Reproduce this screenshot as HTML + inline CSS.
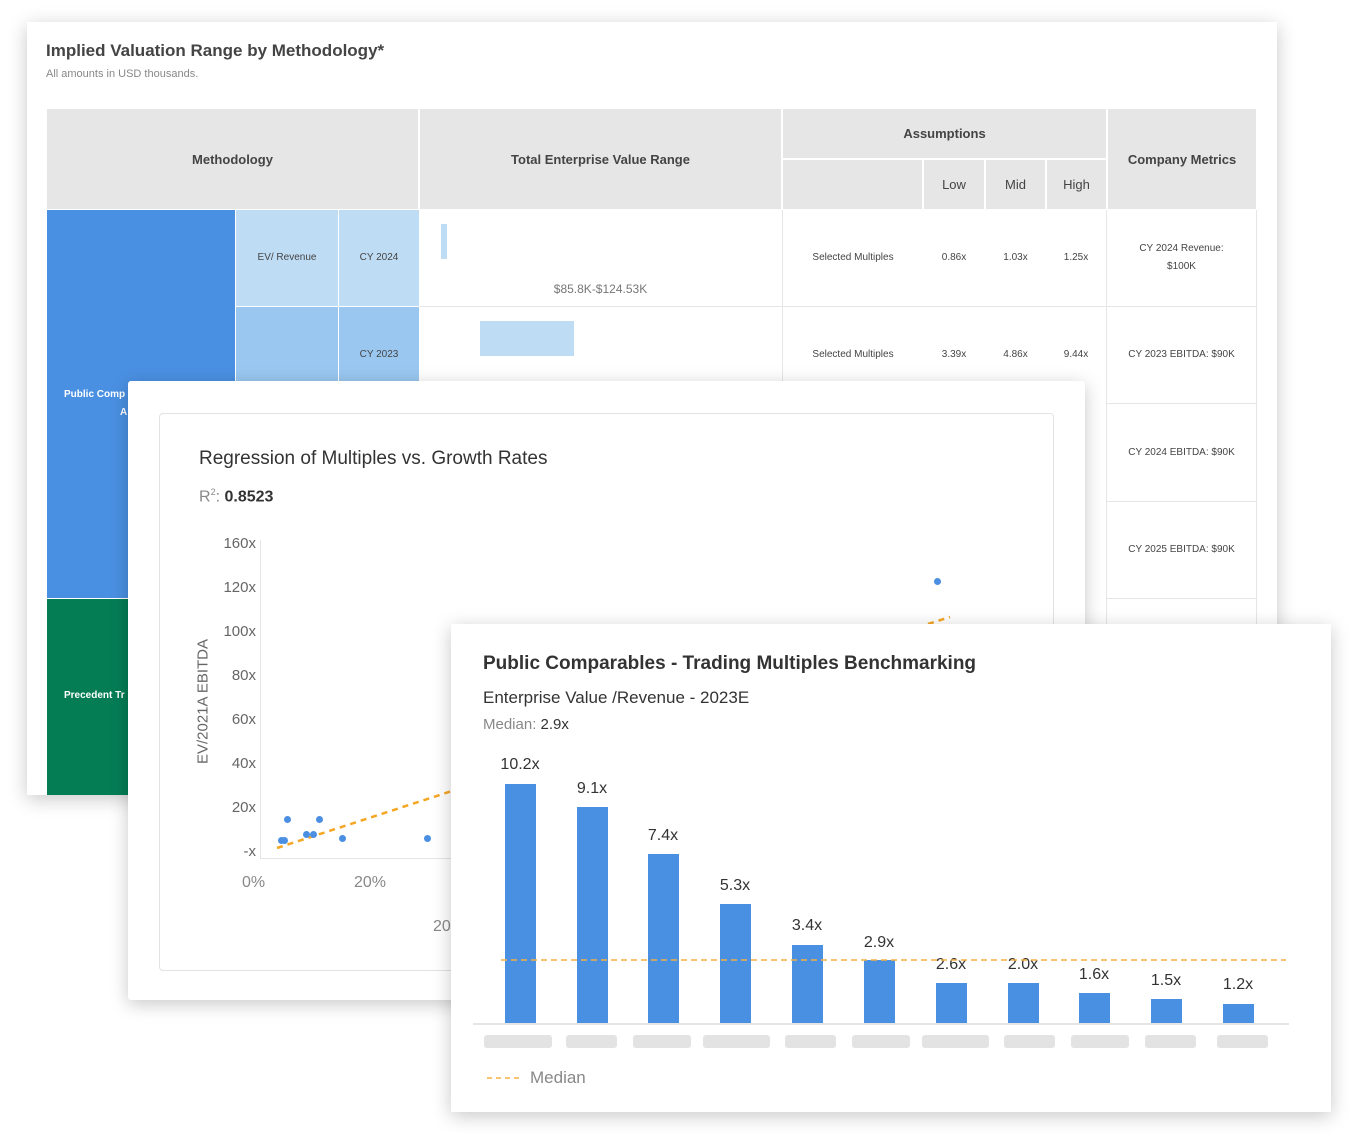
<!DOCTYPE html>
<html><head><style>
body{margin:0;width:1351px;height:1134px;background:#fff;position:relative;overflow:hidden;font-family:"Liberation Sans",sans-serif;color:#333}
.a{position:absolute}
.card{position:absolute;background:#fff;box-shadow:0 4px 18px rgba(0,0,0,.22)}
.h{background:#e6e6e6;font-weight:bold;font-size:13px;color:#444;display:flex;align-items:center;justify-content:center;position:absolute}
.c{position:absolute;display:flex;align-items:center;justify-content:center;font-size:10px;color:#444;text-align:center;line-height:18px}
.bar{position:absolute;background:#4a90e2;width:31px}
.lb{position:absolute;font-size:16px;color:#333;width:60px;text-align:center}
.pill{position:absolute;top:1035px;height:13px;background:#e3e3e3;border-radius:3px}
.yl{position:absolute;font-size:15px;color:#666;text-align:right;width:50px;left:206px}
.dot{position:absolute;width:7px;height:7px;border-radius:50%;background:#4a8fe2}
</style></head><body>

<div class="card" style="left:27px;top:22px;width:1250px;height:773px">
</div>
<div class="a" style="left:46px;top:41px;font-size:17px;font-weight:bold;color:#444">Implied Valuation Range by Methodology*</div>
<div class="a" style="left:46px;top:68px;font-size:11px;color:#888">All amounts in USD thousands.</div>

<div class="h" style="left:47px;top:109px;width:371px;height:100px">Methodology</div>
<div class="h" style="left:420px;top:109px;width:361px;height:100px">Total Enterprise Value Range</div>
<div class="h" style="left:783px;top:109px;width:323px;height:49px">Assumptions</div>
<div class="h" style="left:783px;top:160px;width:139px;height:49px"></div>
<div class="h" style="left:924px;top:160px;width:60px;height:49px;font-weight:normal">Low</div>
<div class="h" style="left:986px;top:160px;width:59px;height:49px;font-weight:normal">Mid</div>
<div class="h" style="left:1047px;top:160px;width:59px;height:49px;font-weight:normal">High</div>
<div class="h" style="left:1108px;top:109px;width:148px;height:100px">Company Metrics</div>

<div class="a" style="left:47px;top:210px;width:188px;height:388px;background:#4a90e2"></div>
<div class="a" style="left:64px;top:389px;font-size:10px;font-weight:bold;color:#fff">Public Comp</div>
<div class="a" style="left:120px;top:407px;font-size:10px;font-weight:bold;color:#fff">A</div>
<div class="a" style="left:47px;top:599px;width:188px;height:196px;background:#047d55"></div>
<div class="a" style="left:64px;top:690px;font-size:10px;font-weight:bold;color:#fff">Precedent Tr</div>
<div class="c" style="left:236px;top:210px;width:102px;height:96px;background:#bfdcf5">EV/ Revenue</div>
<div class="c" style="left:339px;top:210px;width:80px;height:96px;background:#bfdcf5">CY 2024</div>
<div class="c" style="left:236px;top:307px;width:102px;height:90px;background:#99c7f0"></div>
<div class="c" style="left:339px;top:307px;width:80px;height:96px;background:#99c7f0">CY 2023</div>
<div class="a" style="left:441px;top:224px;width:6px;height:35px;background:#bfdcf5"></div>
<div class="a" style="left:420px;top:282px;width:361px;text-align:center;font-size:12px;color:#777">$85.8K-$124.53K</div>
<div class="a" style="left:480px;top:321px;width:94px;height:35px;background:#bfdcf5"></div>
<div class="a" style="left:419px;top:306px;width:837px;height:1px;background:#e6e6e6"></div>
<div class="a" style="left:782px;top:210px;width:1px;height:390px;background:#e6e6e6"></div>
<div class="a" style="left:1106px;top:210px;width:1px;height:585px;background:#e6e6e6"></div>
<div class="a" style="left:1106px;top:403px;width:150px;height:1px;background:#e6e6e6"></div>
<div class="a" style="left:1106px;top:501px;width:150px;height:1px;background:#e6e6e6"></div>
<div class="a" style="left:1106px;top:598px;width:150px;height:1px;background:#e6e6e6"></div>
<div class="a" style="left:1256px;top:210px;width:1px;height:585px;background:#e6e6e6"></div>
<div class="c" style="left:783px;top:210px;width:140px;height:96px">Selected Multiples</div>
<div class="c" style="left:923px;top:210px;width:62px;height:96px">0.86x</div>
<div class="c" style="left:985px;top:210px;width:61px;height:96px">1.03x</div>
<div class="c" style="left:1046px;top:210px;width:60px;height:96px">1.25x</div>
<div class="c" style="left:1107px;top:210px;width:149px;height:96px">CY 2024 Revenue:<br>$100K</div>
<div class="c" style="left:783px;top:307px;width:140px;height:96px">Selected Multiples</div>
<div class="c" style="left:923px;top:307px;width:62px;height:96px">3.39x</div>
<div class="c" style="left:985px;top:307px;width:61px;height:96px">4.86x</div>
<div class="c" style="left:1046px;top:307px;width:60px;height:96px">9.44x</div>
<div class="c" style="left:1107px;top:307px;width:149px;height:96px">CY 2023 EBITDA: $90K</div>
<div class="c" style="left:1107px;top:404px;width:149px;height:97px">CY 2024 EBITDA: $90K</div>
<div class="c" style="left:1107px;top:501px;width:149px;height:97px">CY 2025 EBITDA: $90K</div>

<div class="card" style="left:128px;top:381px;width:957px;height:619px;border-radius:3px"></div>
<div class="a" style="left:159px;top:413px;width:893px;height:556px;border:1px solid #e3e3e3;border-radius:4px"></div>
<div class="a" style="left:199px;top:448px;font-size:19px;color:#333">Regression of Multiples vs. Growth Rates</div>
<div class="a" style="left:199px;top:487px;font-size:16px;color:#888">R<sup style="font-size:9px">2</sup>: <b style="color:#333">0.8523</b></div>
<div class="yl" style="top:535px">160x</div><div class="yl" style="top:579px">120x</div><div class="yl" style="top:623px">100x</div><div class="yl" style="top:667px">80x</div><div class="yl" style="top:711px">60x</div><div class="yl" style="top:755px">40x</div><div class="yl" style="top:799px">20x</div><div class="yl" style="top:843px">-x</div>
<div class="a" style="left:118px;top:693px;width:170px;transform:rotate(-90deg);font-size:15px;color:#666;text-align:center">EV/2021A EBITDA</div>
<div class="a" style="left:260px;top:540px;width:1px;height:318px;background:#e5e5e5"></div>
<div class="a" style="left:260px;top:858px;width:200px;height:1px;background:#e5e5e5"></div>
<div class="a" style="left:242px;top:874px;font-size:16px;color:#888">0%</div>
<div class="a" style="left:354px;top:874px;font-size:16px;color:#888">20%</div>
<div class="a" style="left:433px;top:918px;font-size:16px;color:#888">20</div>
<svg class="a" style="left:0;top:0" width="1351" height="1134"><line x1="277" y1="848" x2="455" y2="790" stroke="#f5a623" stroke-width="2.5" stroke-dasharray="6,5"/><line x1="928" y1="624" x2="950" y2="617" stroke="#f5a623" stroke-width="2.5" stroke-dasharray="6,5"/></svg>
<div class="dot" style="left:278px;top:837px"></div><div class="dot" style="left:281px;top:837px"></div><div class="dot" style="left:284px;top:816px"></div><div class="dot" style="left:303px;top:831px"></div><div class="dot" style="left:310px;top:831px"></div><div class="dot" style="left:316px;top:816px"></div><div class="dot" style="left:339px;top:835px"></div><div class="dot" style="left:424px;top:835px"></div><div class="dot" style="left:934px;top:578px"></div>

<div class="card" style="left:451px;top:624px;width:880px;height:488px"></div>
<div class="a" style="left:483px;top:653px;font-size:19px;font-weight:bold;color:#333">Public Comparables - Trading Multiples Benchmarking</div>
<div class="a" style="left:483px;top:688px;font-size:17px;color:#333">Enterprise Value /Revenue - 2023E</div>
<div class="a" style="left:483px;top:716px;font-size:15px;color:#888">Median: <span style="color:#333">2.9x</span></div>
<div class="bar" style="left:505px;top:784px;height:239px"></div><div class="lb" style="left:490px;top:756px">10.2x</div>
<div class="bar" style="left:577px;top:807px;height:216px"></div><div class="lb" style="left:562px;top:780px">9.1x</div>
<div class="bar" style="left:648px;top:854px;height:169px"></div><div class="lb" style="left:633px;top:827px">7.4x</div>
<div class="bar" style="left:720px;top:904px;height:119px"></div><div class="lb" style="left:705px;top:877px">5.3x</div>
<div class="bar" style="left:792px;top:945px;height:78px"></div><div class="lb" style="left:777px;top:917px">3.4x</div>
<div class="bar" style="left:864px;top:960px;height:63px"></div><div class="lb" style="left:849px;top:934px">2.9x</div>
<div class="bar" style="left:936px;top:983px;height:40px"></div><div class="lb" style="left:921px;top:956px">2.6x</div>
<div class="bar" style="left:1008px;top:983px;height:40px"></div><div class="lb" style="left:993px;top:956px">2.0x</div>
<div class="bar" style="left:1079px;top:993px;height:30px"></div><div class="lb" style="left:1064px;top:966px">1.6x</div>
<div class="bar" style="left:1151px;top:999px;height:24px"></div><div class="lb" style="left:1136px;top:972px">1.5x</div>
<div class="bar" style="left:1223px;top:1004px;height:19px"></div><div class="lb" style="left:1208px;top:976px">1.2x</div>
<svg class="a" style="left:0;top:0" width="1351" height="1134"><line x1="501" y1="960" x2="1286" y2="960" stroke="#f5b041" stroke-width="1.5" stroke-dasharray="6,4"/><line x1="487" y1="1078" x2="523" y2="1078" stroke="#f5b041" stroke-width="1.5" stroke-dasharray="5,4"/></svg>
<div class="a" style="left:473px;top:1023px;width:816px;height:2px;background:#e5e5e5"></div>
<div class="pill" style="left:484px;width:68px"></div><div class="pill" style="left:566px;width:51px"></div><div class="pill" style="left:633px;width:58px"></div><div class="pill" style="left:703px;width:67px"></div><div class="pill" style="left:785px;width:51px"></div><div class="pill" style="left:852px;width:58px"></div><div class="pill" style="left:922px;width:67px"></div><div class="pill" style="left:1004px;width:51px"></div><div class="pill" style="left:1071px;width:58px"></div><div class="pill" style="left:1145px;width:51px"></div><div class="pill" style="left:1217px;width:51px"></div>
<div class="a" style="left:530px;top:1068px;font-size:17px;color:#888">Median</div>
</body></html>
